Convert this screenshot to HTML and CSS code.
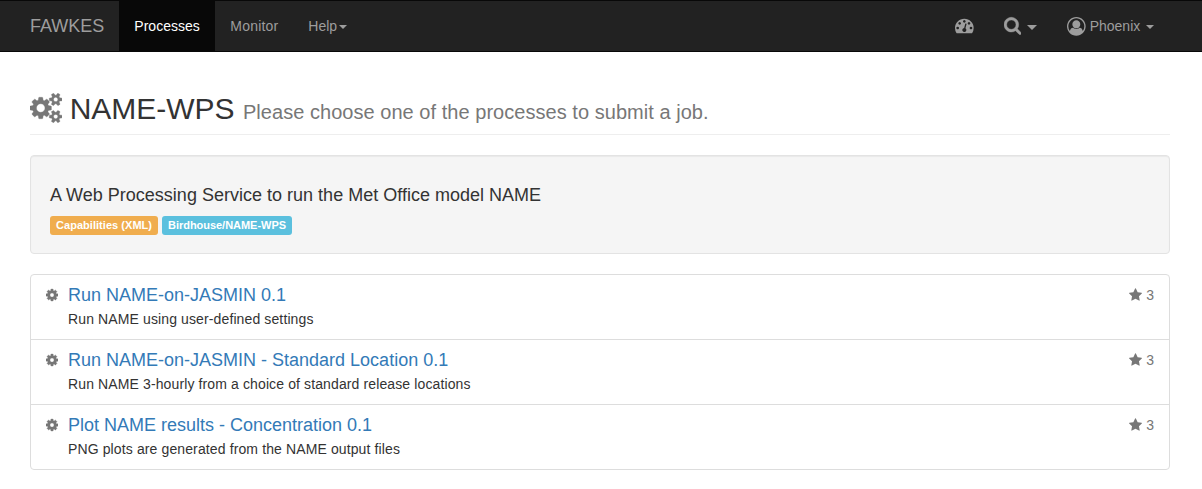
FILE: index.html
```html
<!DOCTYPE html>
<html lang="en">
<head>
<meta charset="utf-8">
<title>Processes</title>
<link rel="stylesheet" href="styles.css">
</head>
<body>
<svg class="defs" aria-hidden="true">
<symbol id="cog" viewBox="128 0 1536 1792"><path d="M1152 896q0-106-75-181t-181-75-181 75-75 181 75 181 181 75 181-75 75-181zm512-109v222q0 12-8 23t-20 13l-185 28q-19 54-39 91 35 50 107 138 10 12 10 25t-9 23q-27 37-99 108t-94 71q-12 0-26-9l-138-108q-44 23-91 38-16 136-29 186-7 28-36 28h-222q-14 0-24.500-8.500t-11.500-21.500l-28-184q-49-16-90-37l-141 107q-10 9-25 9-14 0-25-11-126-114-165-168-7-10-7-23 0-12 8-23 15-21 51-66.500t54-70.500q-27-50-41-99l-183-27q-13-2-21-12.500t-8-23.500v-222q0-12 8-23t19-13l186-28q14-46 39-92-40-57-107-138-10-12-10-24 0-10 9-23 26-36 98.500-107.500t94.500-71.500q13 0 26 10l138 107q44-23 91-38 16-136 29-186 7-28 36-28h222q14 0 24.500 8.500t11.500 21.500l28 184q49 16 90 37l142-107q9-9 24-9 13 0 25 10 129 119 165 170 7 8 7 22 0 12-8 23-15 21-51 66.500t-54 70.500q26 50 41 98l183 28q13 2 21 12.500t8 23.500z"/></symbol>
<symbol id="star" viewBox="64 0 1664 1792"><path d="M1728 647q0 22-26 48l-363 354 86 500q1 7 1 20 0 21-10.500 35.500t-30.500 14.500q-19 0-40-12l-449-236-449 236q-22 12-40 12-21 0-31.500-14.500t-10.500-35.500q0-6 2-20l86-500-364-354q-25-27-25-48 0-37 56-46l502-73 225-455q19-41 49-41t49 41l225 455 502 73q56 9 56 46z"/></symbol>
</svg>

<nav class="navbar">
  <div class="navbar-inner">
    <a class="brand">FAWKES</a>
    <a class="nav-item active">Processes</a>
    <a class="nav-item monitor">Monitor</a>
    <a class="nav-item">Help<span class="caret caret-help"></span></a>
    <div class="nav-right">
      <a class="nav-item"><svg class="icon icon-dash" viewBox="0 0 1792 1792"><path d="M384 1152q0-53-37.500-90.500t-90.500-37.500-90.500 37.500-37.500 90.500 37.500 90.500 90.500 37.500 90.500-37.500 37.500-90.500zm192-448q0-53-37.500-90.500t-90.500-37.500-90.500 37.500-37.500 90.500 37.500 90.500 90.500 37.500 90.500-37.500 37.500-90.500zm428 481l101-382q6-26-7.500-48.500t-38.500-29.500-48 6.500-30 39.500l-101 382q-60 5-107 43.500t-63 98.500q-20 77 20 146t117 89 146-20 89-117q16-60-6-117t-72-91zm660-33q0-53-37.500-90.500t-90.500-37.500-90.500 37.500-37.500 90.500 37.500 90.500 90.500 37.500 90.500-37.500 37.500-90.500zm-640-640q0-53-37.500-90.500t-90.500-37.500-90.500 37.500-37.500 90.500 37.500 90.500 90.500 37.500 90.500-37.500 37.500-90.500zm448 192q0-53-37.500-90.500t-90.500-37.500-90.500 37.500-37.500 90.500 37.500 90.500 90.500 37.500 90.500-37.500 37.500-90.500zm320 448q0 261-141 483-19 29-54 29h-1402q-35 0-54-29-141-221-141-483 0-182 71-348t191-286 286-191 348-71 348 71 286 191 191 286 71 348z"/></svg></a>
      <a class="nav-item search"><svg class="icon icon-search" viewBox="64 0 1664 1792"><path d="M1216 832q0-185-131.500-316.500t-316.500-131.500-316.500 131.500-131.500 316.500 131.500 316.500 316.500 131.500 316.500-131.500 131.500-316.500zm512 832q0 52-38 90t-90 38q-54 0-90-38l-343-342q-179 124-399 124-143 0-273.500-55.500t-225-150-150-225-55.500-273.500 55.500-273.500 150-225 225-150 273.500-55.500 273.500 55.500 225 150 150 225 55.500 273.500q0 220-124 399l343 343q37 37 37 90z"/></svg><span class="caret caret-lg"></span></a>
      <a class="nav-item user"><svg class="icon icon-user" viewBox="0 0 1792 1792"><path d="M896 0q182 0 348 71t286 191 191 286 71 348q0 181-70.500 347t-190.500 286-286 191.500-349 71.500-349-71-285.500-191.500-190.500-286-71-347.500 71-348 191-286 286-191 348-71zm619 1351q149-205 149-455 0-156-61-298t-164-245-245-164-298-61-298 61-245 164-164 245-61 298q0 250 149 455 66-327 306-327 131 128 313 128t313-128q240 0 306 327zm-235-647q0-159-112.500-271.500t-271.500-112.500-271.500 112.500-112.500 271.500 112.500 271.500 271.500 112.500 271.500-112.500 112.500-271.500z"/></svg>Phoenix<span class="caret caret-gap"></span></a>
    </div>
  </div>
</nav>

<main class="container">
  <header class="page-header">
    <svg class="icon-cogs" viewBox="0 0 1920 1792"><path d="M896 896q0-106-75-181t-181-75-181 75-75 181 75 181 181 75 181-75 75-181zm768 512q0-52-38-90t-90-38-90 38-38 90q0 53 37.500 90.500t90.500 37.500 90.500-37.500 37.500-90.500zm0-1024q0-52-38-90t-90-38-90 38-38 90q0 53 37.500 90.500t90.500 37.500 90.500-37.500 37.500-90.500zm-384 421v185q0 10-7 19.500t-16 10.500l-155 24q-11 35-32 76 34 48 90 115 7 11 7 20 0 12-7 19-23 30-82.500 89.500t-78.500 59.500q-11 0-21-7l-115-90q-37 19-77 31-11 108-23 155-7 24-30 24h-186q-11 0-20-7.500t-10-17.500l-23-153q-34-10-75-31l-118 89q-7 7-20 7-11 0-21-8-144-133-144-160 0-9 7-19 10-14 41-53t47-61q-23-44-35-82l-152-24q-10-1-17-9.500t-7-19.500v-185q0-10 7-19.500t16-10.500l155-24q11-35 32-76-34-48-90-115-7-11-7-20 0-12 7-20 22-30 82-89t79-59q11 0 21 7l115 90q34-18 77-32 11-108 23-154 7-24 30-24h186q11 0 20 7.500t10 17.500l23 153q34 10 75 31l118-89q8-7 20-7 11 0 21 8 144 133 144 160 0 8-7 19-12 16-42 54t-45 60q23 48 34 82l152 23q10 2 17 10.500t7 19.500zm640 533v140q0 16-149 31-12 27-30 52 51 113 51 138 0 4-4 7-122 71-124 71-8 0-46-47t-52-68q-20 2-30 2t-30-2q-14 21-52 68t-46 47q-2 0-124-71-4-3-4-7 0-25 51-138-18-25-30-52-149-15-149-31v-140q0-16 149-31 13-29 30-52-51-113-51-138 0-4 4-7 4-2 35-20t59-34 30-16q8 0 46 46.500t52 67.500q20-2 30-2t30 2q51-71 92-112l6-2q4 0 124 70 4 3 4 7 0 25-51 138 17 23 30 52 149 15 149 31zm0-1024v140q0 16-149 31-12 27-30 52 51 113 51 138 0 4-4 7-122 71-124 71-8 0-46-47t-52-68q-20 2-30 2t-30-2q-14 21-52 68t-46 47q-2 0-124-71-4-3-4-7 0-25 51-138-18-25-30-52-149-15-149-31v-140q0-16 149-31 13-29 30-52-51-113-51-138 0-4 4-7 4-2 35-20t59-34 30-16q8 0 46 46.500t52 67.500q20-2 30-2t30 2q51-71 92-112l6-2q4 0 124 70 4 3 4 7 0 25-51 138 17 23 30 52 149 15 149 31z"/></svg>
    <h1 class="title">NAME-WPS <small class="subtitle">Please choose one of the processes to submit a job.</small></h1>
  </header>

  <section class="well">
    <h4 class="well-title">A Web Processing Service to run the Met Office model NAME</h4>
    <div class="labels">
      <a class="label warning">Capabilities (XML)</a>
      <a class="label info">Birdhouse/NAME-WPS</a>
    </div>
  </section>

  <div class="list">
    <div class="row">
      <svg class="row-cog"><use href="#cog"/></svg>
      <div class="row-body"><h4 class="row-title">Run NAME-on-JASMIN 0.1</h4><p class="row-text">Run NAME using user-defined settings</p></div>
      <div class="rating"><svg class="row-star"><use href="#star"/></svg>3</div>
    </div>
    <div class="row">
      <svg class="row-cog"><use href="#cog"/></svg>
      <div class="row-body"><h4 class="row-title">Run NAME-on-JASMIN - Standard Location 0.1</h4><p class="row-text">Run NAME 3-hourly from a choice of standard release locations</p></div>
      <div class="rating"><svg class="row-star"><use href="#star"/></svg>3</div>
    </div>
    <div class="row">
      <svg class="row-cog"><use href="#cog"/></svg>
      <div class="row-body"><h4 class="row-title">Plot NAME results - Concentration 0.1</h4><p class="row-text">PNG plots are generated from the NAME output files</p></div>
      <div class="rating"><svg class="row-star"><use href="#star"/></svg>3</div>
    </div>
  </div>
</main>
</body>
</html>
```

FILE: styles.css
```css
* { box-sizing: border-box; }
body {
  margin: 0;
  background: #fff;
  color: #333;
  font: 14px/20px "Liberation Sans", Arial, sans-serif;
}
h1, h4, p { margin: 0; font-weight: 400; }
svg { display: block; flex: none; fill: currentColor; }
.defs { display: none; }

.navbar {
  height: 52px;
  background: #222;
  border-top: 1px solid #080808;
  border-bottom: 1px solid #080808;
  color: #9d9d9d;
}
.navbar-inner {
  display: flex;
  width: 1170px;
  height: 50px;
  padding-left: 15px;
}
.brand { padding: 15px; font-size: 18px; }
.nav-item { display: flex; padding: 15px; }
.nav-item.active { width: 96px; background: #080808; color: #fff; }
.monitor { width: 78px; letter-spacing: .2px; }
.nav-right { display: flex; margin-left: auto; }
.caret {
  width: 8px;
  height: 4px;
  margin-top: 9px;
  border-top: 4px solid;
  border-left: 4px solid transparent;
  border-right: 4px solid transparent;
}
.caret-help { margin-left: 2px; }
.caret-gap { margin-left: 6px; }
.caret-lg {
  width: 10px;
  height: 5px;
  margin-left: 6px;
  border-width: 5px 5px 0;
}
.icon { height: 18.67px; }
.icon-dash { width: 18.67px; }
.icon-search { width: 17.33px; stroke: currentColor; stroke-width: 40; }
.icon-user { width: 18.67px; margin: 1px 4px 0 0; }
.user { width: 118px; }

.container { width: 1170px; padding-left: 30px; }
.page-header {
  display: flex;
  height: 83px;
  padding-top: 41px;
  border-bottom: 1px solid #eee;
}
.icon-cogs {
  width: 32.14px;
  height: 30px;
  margin-right: 7.5px;
  color: #777;
  stroke: currentColor;
  stroke-width: 20;
}
.title { font-size: 30px; line-height: 33px; margin-top: -1px; }
.subtitle { font-size: 20px; letter-spacing: .04px; color: #777; }

.well {
  height: 99px;
  margin-top: 20px;
  padding: 29px 19px 0;
  background: #f5f5f5;
  border: 1px solid #e3e3e3;
  border-radius: 4px;
  box-shadow: inset 0 1px 1px rgba(0, 0, 0, .05);
}
.well-title { font-size: 18px; line-height: 20px; letter-spacing: .01px; }
.labels { display: flex; gap: 4px; margin-top: 11px; }
.label {
  height: 19px;
  padding: 0 6px;
  border-radius: 3px;
  color: #fff;
  font-size: 11px;
  font-weight: 700;
  line-height: 19px;
  white-space: nowrap;
}
.warning { width: 108px; letter-spacing: .04px; background: #f0ad4e; }
.info { width: 130px; letter-spacing: -.03px; background: #5bc0de; }

.list { margin-top: 20px; border: 1px solid #ddd; border-radius: 4px; }
.row { display: flex; height: 65px; padding: 10px 15px; }
.row + .row { border-top: 1px solid #ddd; }
.row:first-child { height: 64px; }
.row-cog {
  width: 12px;
  height: 14px;
  margin: 3px 10px 0 0;
  color: #777;
  stroke: currentColor;
  stroke-width: 40;
}
.row-title { font-size: 18px; line-height: 20px; color: #337ab7; }
.row-text { margin-top: 4px; letter-spacing: .12px; }
.rating { display: flex; margin-left: auto; color: #777; }
.row-star { width: 13px; height: 14px; margin: 3px 4px 0 0; }
```
